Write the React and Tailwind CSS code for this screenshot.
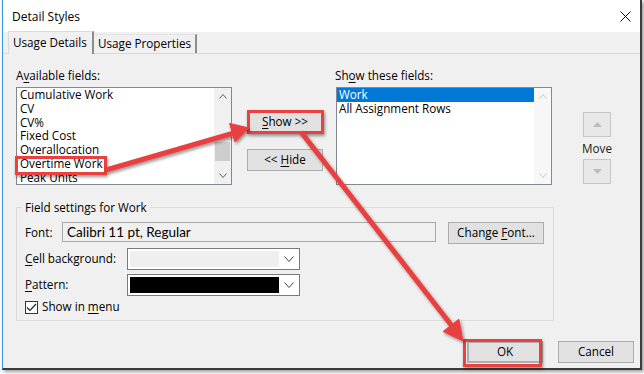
import React from "react";

// mnemonic underline
const U = ({ children }) => <span className="underline underline-offset-[2px]">{children}</span>;

function Chevron({ up = false, w = 9, h = 5, className = "" }) {
  return (
    <svg width={w} height={h} viewBox={`0 0 ${w} ${h}`} className={className}>
      <path
        d={up ? `M0.5 ${h - 0.5} L${w / 2} 0.5 L${w - 0.5} ${h - 0.5}` : `M0.5 0.5 L${w / 2} ${h - 0.5} L${w - 0.5} 0.5`}
        fill="none"
        stroke="currentColor"
        strokeWidth="1"
      />
    </svg>
  );
}

function Btn({ children, className = "" }) {
  return (
    <div
      className={`h-[22px] w-[76px] flex items-center justify-center bg-[#e1e1e1] border border-[#adadad] text-[#000] ${className}`}
    >
      <span className="whitespace-pre">{children}</span>
    </div>
  );
}

function Scrollbar({ disabled = false, thumb = false }) {
  return (
    <div className={`w-[17px] h-full flex flex-col ${disabled ? "bg-[#f7f7f7]" : "bg-[#f0f0f0]"}`}>
      <div className={`h-[17px] flex items-center justify-center ${disabled ? "text-[#c4c4c4]" : "text-[#606060]"}`}>
        <Chevron up w={8} h={5} />
      </div>
      <div className="flex-1 flex flex-col items-center">
        {thumb && <div className="mt-[37px] w-[15px] h-[19px] bg-[#cdcdcd]" />}
      </div>
      <div className={`h-[17px] flex items-center justify-center ${disabled ? "text-[#c4c4c4]" : "text-[#606060]"}`}>
        <Chevron w={8} h={5} />
      </div>
    </div>
  );
}

function Combo({ fill }) {
  return (
    <div className="w-[173px] h-[22px] border border-[#7a7a7a] bg-white flex items-center pl-[2px]">
      <div className={`w-[149px] h-[16px] ${fill}`} />
      <div className="flex-1 flex items-center justify-center text-[#444]">
        <Chevron w={10} h={6} />
      </div>
    </div>
  );
}

const available = ["Cumulative Work", "CV", "CV%", "Fixed Cost", "Overallocation", "Overtime Work", "Peak Units"];

export default function App() {
  return (
    <div className="w-[644px] h-[374px] bg-[#fafafa] relative overflow-hidden font-['Open_Sans',sans-serif] text-[11.7px] text-black">
      <div className="ml-[2px] w-[640px] h-[370px] border-l border-l-[#3a94dc] border-r-2 border-b-2 border-r-[#3c3c3c] border-b-[#3c3c3c] shadow-[2px_2px_3px_rgba(0,0,0,0.35)] flex flex-col bg-[#f0f0f0]">
        {/* title bar */}
        <div className="h-[32px] bg-white flex items-center justify-between pl-[9px] pr-[9px]">
          <span className="text-[12px] mt-[1px]">Detail Styles</span>
          <svg width="11" height="11" viewBox="0 0 11 11">
            <path d="M0.5 0.5 L10.5 10.5 M10.5 0.5 L0.5 10.5" stroke="#111" strokeWidth="1" />
          </svg>
        </div>

        {/* tabs */}
        <div className="h-[22px] flex items-end pl-[5px] border-b border-[#d9d9d9]">
          <div className="w-[86px] border-l border-t border-[#d9d9d9] border-r-2 border-r-[#8c8c8c] bg-[#f0f0f0] pl-[4px] pt-[2px] leading-[16px] -mb-px h-[23px]">
            Usage Details
          </div>
          <div className="h-[19px] w-[103px] border-t border-[#e3e3e3] border-r-2 border-r-[#8c8c8c] pl-[4px] leading-[17px]">
            Usage Properties
          </div>
        </div>

        {/* top row: lists + buttons */}
        <div className="mt-[13px] flex items-start pl-[13px]">
          <div className="w-[216px] flex flex-col">
            <div className="h-[16px] leading-[16px]">
              A<U>v</U>ailable fields:
            </div>
            <div className="mt-[4px] h-[98px] border border-[#828790] bg-white flex">
              <div className="flex-1 pl-[3px] overflow-hidden leading-[13.8px] whitespace-nowrap">
                {available.map((f) => (
                  <div key={f}>{f}</div>
                ))}
              </div>
              <Scrollbar thumb />
            </div>
          </div>

          <div className="ml-[15px] w-[76px] flex flex-col">
            <Btn className="mt-[43px] h-[23px]">
              <U>S</U>how &gt;&gt;
            </Btn>
            <Btn className="mt-[16px]">
              &lt;&lt; <U>H</U>ide
            </Btn>
          </div>

          <div className="ml-[12px] w-[217px] flex flex-col">
            <div className="h-[16px] leading-[16px]">
              Sh<U>o</U>w these fields:
            </div>
            <div className="mt-[4px] ml-[1px] h-[98px] border border-[#828790] bg-white flex">
              <div className="flex-1 overflow-hidden leading-[13.8px] whitespace-nowrap">
                <div className="bg-[#0078d7] text-white pl-[2px]">Work</div>
                <div className="pl-[2px]">All Assignment Rows</div>
              </div>
              <Scrollbar disabled />
            </div>
          </div>

          <div className="ml-[31px] w-[28px] flex flex-col items-center">
            <div className="mt-[45px] w-[28px] h-[25px] border border-[#c6c6c6] bg-[#e8e8e8] flex items-center justify-center">
              <svg width="9" height="5" viewBox="0 0 9 5">
                <path d="M0 5 L4.5 0 L9 5 Z" fill="#bcbcbc" />
              </svg>
            </div>
            <div className="h-[22px] leading-[22px] text-[#1b1b1b]">Move</div>
            <div className="w-[28px] h-[25px] border border-[#c6c6c6] bg-[#e8e8e8] flex items-center justify-center">
              <svg width="9" height="5" viewBox="0 0 9 5">
                <path d="M0 0 L4.5 5 L9 0 Z" fill="#bcbcbc" />
              </svg>
            </div>
          </div>
        </div>

        {/* field settings group */}
        <fieldset className="mt-[14px] ml-[13px] w-[538px] h-[122px] border border-[#dcdcdc] pl-[8px]">
          <legend className="ml-[-3px] px-[3px] h-[16px] leading-[16px]">Field settings for Work</legend>
          <div className="mt-[7px] flex items-start">
            <div className="w-[37px] leading-[20px]">Font:</div>
            <div className="w-[374px] h-[20px] border border-[#a9a9a9] bg-[#f0f0f0] pl-[4px] leading-[18px] font-['Lato',sans-serif] text-[13.5px]">
              Calibri 11 pt, Regular
            </div>
            <Btn className="ml-[12px] w-[96px]">
              Change <U>F</U>ont...
            </Btn>
          </div>
          <div className="mt-[4px] flex items-center">
            <div className="w-[102px]">
              <U>C</U>ell background:
            </div>
            <Combo fill="bg-[#efefef]" />
          </div>
          <div className="mt-[4px] flex items-center">
            <div className="w-[102px]">
              <U>P</U>attern:
            </div>
            <Combo fill="bg-black" />
          </div>
          <div className="mt-[4px] flex items-center h-[14px]">
            <div className="w-[13px] h-[13px] border border-[#333] bg-white flex items-center justify-center">
              <svg width="11" height="9" viewBox="0 0 11 9">
                <path d="M1 4.5 L4 7.5 L10 1" fill="none" stroke="#222" strokeWidth="1.2" />
              </svg>
            </div>
            <div className="ml-[4px]">
              Show in <U>m</U>enu
            </div>
          </div>
        </fieldset>

        {/* dialog buttons */}
        <div className="mt-[20px] flex justify-end gap-[15px] pr-[6px]">
          <Btn className="border-2 border-[#0078d7]">OK</Btn>
          <Btn>Cancel</Btn>
        </div>
      </div>

      {/* red highlight boxes */}
      <div className="absolute left-[15px] top-[156px] w-[92px] h-[19px] border-[3px] border-[#e8413f] shadow-[1px_2px_3px_rgba(0,0,0,0.4)]" />
      <div className="absolute left-[247px] top-[110px] w-[77px] h-[24px] border-[3px] border-[#e8413f] shadow-[1px_2px_3px_rgba(0,0,0,0.4)]" />
      <div className="absolute left-[463px] top-[339px] w-[79px] h-[28px] border-[3px] border-[#e8413f] shadow-[1px_2px_3px_rgba(0,0,0,0.4)]" />

      {/* arrows */}
      <svg className="absolute left-0 top-0 pointer-events-none" width="644" height="374" viewBox="0 0 644 374">
        <defs>
          <filter id="sh" x="-10%" y="-10%" width="130%" height="130%">
            <feDropShadow dx="1.5" dy="2" stdDeviation="1.5" floodColor="#000" floodOpacity="0.4" />
          </filter>
        </defs>
        <g filter="url(#sh)" fill="#e8413f" stroke="#e8413f">
          <line x1="106" y1="170" x2="234" y2="133" strokeWidth="5" />
          <path d="M249 128 L229.6 123.4 L234.9 141.9 Z" strokeWidth="1" />
          <line x1="301" y1="132" x2="452" y2="326" strokeWidth="5" />
          <path d="M463 341 L443 331.5 L458.8 319.2 Z" strokeWidth="1" />
        </g>
      </svg>
    </div>
  );
}
